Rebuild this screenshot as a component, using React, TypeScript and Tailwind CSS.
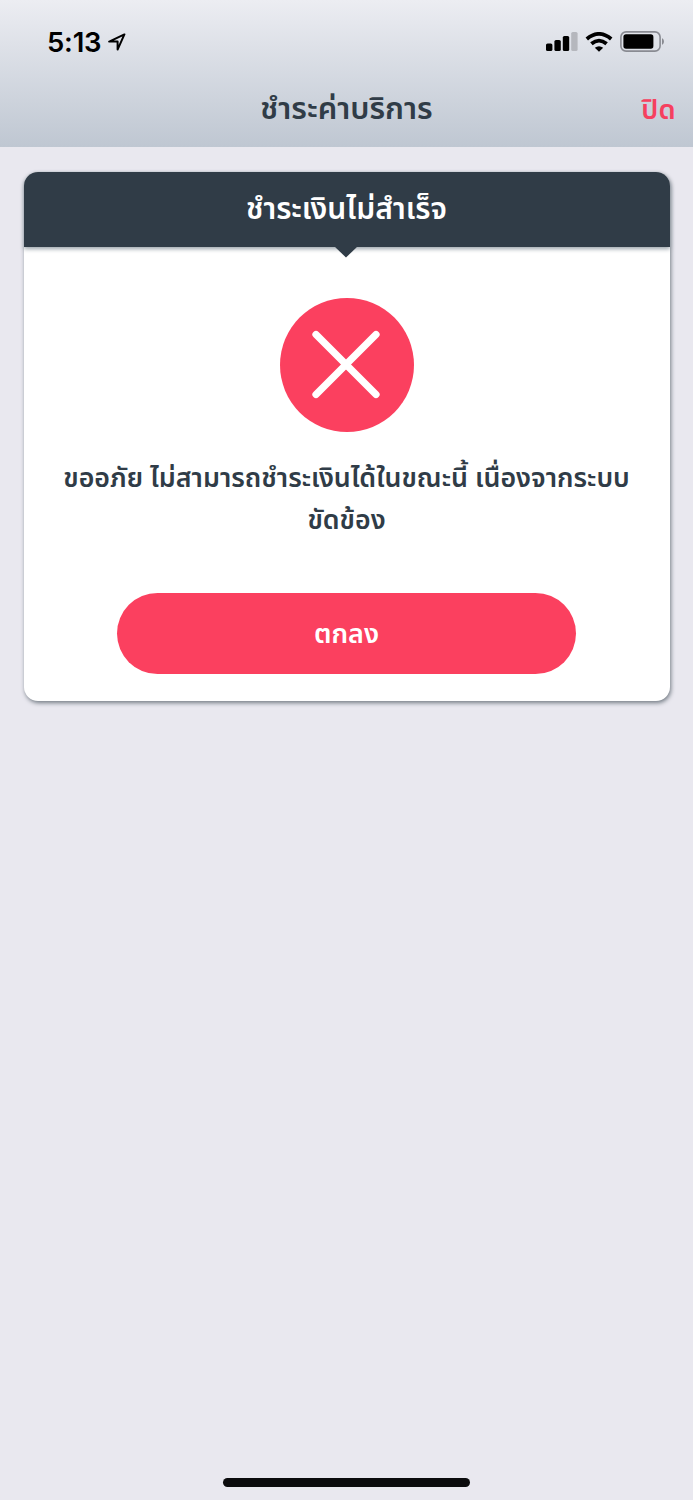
const StatusBar = () => (
  <div className="flex h-[72px] items-start justify-between pt-[26px] pr-[28px] pl-[47px] text-black">
    <div className="flex items-center">
      <span className="w-[55px] font-['Inter'] text-[27.5px] leading-[32px] font-semibold tracking-[-0.2px] whitespace-nowrap">
        5:13
      </span>
      <svg className="ml-[6px] h-[18px] w-[18px]" viewBox="0 0 18 18" fill="none">
        <path
          d="M16.4 1.4 1.2 8.6H9.6V16.6Z"
          stroke="currentColor"
          strokeWidth="2"
          strokeLinejoin="round"
        />
      </svg>
    </div>
    <div className="flex h-[31px] items-center">
      <svg className="h-[19px] w-[32px]" viewBox="0 0 32 19">
        <rect x="0" y="11.5" width="6.4" height="7.5" rx="1.6" />
        <rect x="8.4" y="8" width="6.4" height="11" rx="1.6" />
        <rect x="16.8" y="4" width="6.4" height="15" rx="1.6" />
        <rect x="25.2" y="0" width="6.4" height="19" rx="1.6" fill="#b5b7bd" />
      </svg>
      <svg className="ml-[7px] h-[20px] w-[28px]" viewBox="0 0 28 20" fill="none">
        <path d="M1.8 7Q14-3.2 26.2 7" stroke="currentColor" strokeWidth="3.8" />
        <path d="M6.4 11.8Q14 5.4 21.6 11.8" stroke="currentColor" strokeWidth="3.8" />
        <path d="M9.8 15.7Q14 12.6 18.2 15.7L14 19.8Z" fill="currentColor" />
      </svg>
      <svg className="ml-[7px] h-[21px] w-[45px]" viewBox="0 0 45 21" fill="none">
        <rect x="0.9" y="0.9" width="39.2" height="19.2" rx="5.2" stroke="#898b92" strokeWidth="1.6" />
        <rect x="3.4" y="3.3" width="30" height="14.4" rx="2.6" fill="currentColor" />
        <path d="M42 7.2C44.6 8.2 44.6 12.8 42 13.8Z" fill="#898b92" />
      </svg>
    </div>
  </div>
);

const NavBar = () => (
  <div className="relative flex h-[75px] items-center justify-center">
    <h1 className="text-[30.8px] leading-[40px] font-semibold whitespace-nowrap text-[#303c47]">
      ชำระค่าบริการ
    </h1>
    <button className="absolute top-[19px] right-[17.5px] text-[27.3px] leading-[40px] font-semibold text-[#f6405f]">
      ปิด
    </button>
  </div>
);

const FailedIcon = () => (
  <svg className="h-[134px] w-[134px]" viewBox="0 0 134 134" fill="none">
    <circle cx="67" cy="67" r="67" fill="#fb405f" />
    <path d="M36 36.5 96 96.5M96 36.5 36 96.5" stroke="#fff" strokeWidth="7.2" strokeLinecap="round" />
  </svg>
);

export default function App() {
  return (
    <div className="h-[1500px] w-[694px] bg-white font-['Noto_Sans_Thai','Noto_Sans','Open_Sans',sans-serif]">
      <div className="flex h-full w-[693px] flex-col bg-[#e9e8ef]">
        <header className="h-[147px] bg-linear-to-b from-[#ecedf2] to-[#bfc7d2]">
          <StatusBar />
          <NavBar />
        </header>
        <main className="px-[23.5px] pt-[25.4px]">
          <section className="h-[529px] w-[646px] rounded-[14px] bg-white shadow-[1px_2px_4px_#747c85]">
            <div className="relative flex h-[75px] items-center justify-center rounded-t-[14px] bg-[#303c47] shadow-[0_2px_4px_#9aa3aa]">
              <h2 className="text-[30px] leading-[40px] font-semibold whitespace-nowrap text-white">
                ชำระเงินไม่สำเร็จ
              </h2>
              <svg className="absolute top-[74px] left-[310px] h-[12px] w-[24px]" viewBox="0 0 24 12">
                <path d="M0 0H24L12 11.5Z" fill="#303c47" />
              </svg>
            </div>
            <div className="flex flex-col items-center pt-[51px]">
              <FailedIcon />
              <p className="mt-[26px] text-center text-[26.75px] leading-[42px] font-semibold whitespace-nowrap text-[#303c47]">
                ขออภัย ไม่สามารถชำระเงินได้ในขณะนี้ เนื่องจากระบบ
                <br />
                ขัดข้อง
              </p>
              <button className="mt-[51px] h-[81px] w-[459px] rounded-full bg-[#fb405f] pt-[3px] text-[27px] font-semibold text-white">
                ตกลง
              </button>
            </div>
          </section>
        </main>
        <div className="mx-auto mt-auto mb-[13px] h-[9px] w-[247px] rounded-full bg-[#0b0b0d]" />
      </div>
    </div>
  );
}
